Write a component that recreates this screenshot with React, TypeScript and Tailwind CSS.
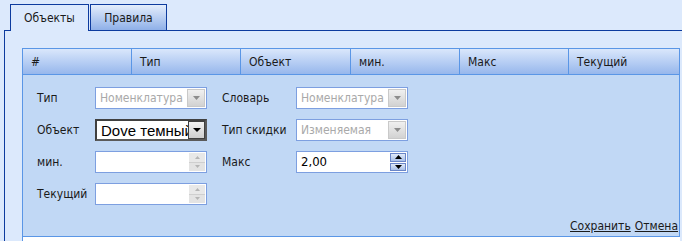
import React from "react";

const NAVY = "border-[#0d3b9e]";

function ArrowDown({ color, w = 7 }: { color: string; w?: number }) {
  return (
    <svg width={w} height={Math.ceil(w / 2)} viewBox={`0 0 ${w} ${Math.ceil(w / 2)}`}>
      <polygon points={`0,0 ${w},0 ${w / 2},${Math.ceil(w / 2)}`} fill={color} />
    </svg>
  );
}
function ArrowUp({ color, w = 7 }: { color: string; w?: number }) {
  return (
    <svg width={w} height={Math.ceil(w / 2)} viewBox={`0 0 ${w} ${Math.ceil(w / 2)}`}>
      <polygon points={`0,${Math.ceil(w / 2)} ${w},${Math.ceil(w / 2)} ${w / 2},0`} fill={color} />
    </svg>
  );
}

function DisabledSelect({ text }: { text: string }) {
  return (
    <div className="w-[112px] h-[22px] border border-[#7d9fe0] bg-white flex items-center">
      <span className="flex-1 pl-[4px] text-[#a9a9a9] whitespace-nowrap overflow-hidden">{text}</span>
      <div className="w-[18px] h-[18px] mr-[1px] border border-[#c9c9c9] bg-gradient-to-b from-[#f0f0f0] to-[#d2d2d2] flex items-center justify-center">
        <ArrowDown color="#8c8c8c" w={7} />
      </div>
    </div>
  );
}

function EnabledSelect({ text }: { text: string }) {
  return (
    <div className="w-[112px] h-[22px] border-2 border-t-[#404040] border-l-[#404040] border-b-[#5a5a5a] border-r-[#5a5a5a] bg-white flex items-center">
      <span className="flex-1 pl-[4px] text-[15px] text-black whitespace-nowrap overflow-hidden leading-none font-['Liberation_Sans',Arial,sans-serif]">{text}</span>
      <div className="w-[17px] h-[18px] border border-[#404040] bg-gradient-to-b from-[#f2f2f2] to-[#cfcfcf] flex items-center justify-center">
        <ArrowDown color="#000" w={8} />
      </div>
    </div>
  );
}

function Spinner({ value, enabled }: { value?: string; enabled?: boolean }) {
  return (
    <div className="w-[112px] h-[22px] border border-[#7d9fe0] bg-white flex items-stretch">
      <span className="flex-1 pl-[4px] text-black text-[13px] flex items-center whitespace-nowrap overflow-hidden">{value}</span>
      {enabled ? (
        <div className="w-[17px] py-[1px] pr-[1px] flex flex-col gap-[1px]">
          <div className="flex-1 border border-[#6a86c8] bg-gradient-to-b from-[#e0eafa] to-[#a9c0e8] flex items-center justify-center">
            <ArrowUp color="#000" w={7} />
          </div>
          <div className="flex-1 border border-[#6a86c8] bg-gradient-to-b from-[#e0eafa] to-[#a9c0e8] flex items-center justify-center">
            <ArrowDown color="#000" w={7} />
          </div>
        </div>
      ) : (
        <div className="w-[17px] py-[1px] pr-[1px] flex flex-col">
          <div className="flex-1 bg-[#e8e8e8] border-b border-[#cfcfcf] flex items-center justify-center">
            <ArrowUp color="#b5b5b5" w={5} />
          </div>
          <div className="flex-1 bg-[#e3e3e3] flex items-center justify-center">
            <ArrowDown color="#b5b5b5" w={5} />
          </div>
        </div>
      )}
    </div>
  );
}

const headers = [
  { t: "#", w: "w-[109px]" },
  { t: "Тип", w: "w-[109px]" },
  { t: "Объект", w: "w-[110px]" },
  { t: "мин.", w: "w-[109px]" },
  { t: "Макс", w: "w-[109px]" },
  { t: "Текущий", w: "w-[111px]" },
];

export default function App() {
  return (
    <div className="w-[682px] h-[241px] overflow-hidden bg-[#dce9fc] pt-[4px] pl-[4px] text-[12px] text-[#1a1a1a] font-['DejaVu_Sans_Condensed','Liberation_Sans',Arial,sans-serif] flex flex-col">
      {/* tabs */}
      <div className="flex h-[27px] shrink-0">
        <div className={`w-[6px] border-b ${NAVY}`} />
        <div className={`w-[79px] border-t border-l border-r ${NAVY} bg-[#dce9fc] flex items-center justify-center pb-[1px]`}>
          Объекты
        </div>
        <div className={`w-[1px] border-b ${NAVY}`} />
        <div className={`w-[77px] border ${NAVY} bg-gradient-to-b from-[#e4edfb] to-[#8fb0e8] flex items-center justify-center`}>
          Правила
        </div>
        <div className={`flex-1 border-b ${NAVY}`} />
      </div>
      {/* panel */}
      <div className={`flex-1 border-l ${NAVY} pt-[17px] pl-[17px] pr-[2px] flex flex-col`}>
        <div className="flex h-[27px] border-y border-l border-[#5a96e6] bg-gradient-to-b from-[#dae7fb] to-[#97b7ec] shrink-0">
          {headers.map((h) => (
            <div key={h.t} className={`${h.w} border-r border-[#5a96e6] flex items-center pl-[8px]`}>
              {h.t}
            </div>
          ))}
        </div>
        <div className="border-l border-r border-b border-[#5a96e6] bg-[#c1d8f5] pt-[12px] pl-[14px] pb-[3px] flex flex-col shrink-0">
          <div className="flex flex-col gap-[10px]">
            <div className="flex items-center h-[22px]">
              <span className="w-[58px]">Тип</span>
              <DisabledSelect text="Номенклатура" />
              <span className="w-[74px] ml-[15px]">Словарь</span>
              <DisabledSelect text="Номенклатура" />
            </div>
            <div className="flex items-center h-[22px]">
              <span className="w-[58px]">Объект</span>
              <EnabledSelect text="Dove темный" />
              <span className="w-[74px] ml-[15px]">Тип скидки</span>
              <DisabledSelect text="Изменяемая" />
            </div>
            <div className="flex items-center h-[22px]">
              <span className="w-[58px]">мин.</span>
              <Spinner />
              <span className="w-[74px] ml-[15px]">Макс</span>
              <Spinner value="2,00" enabled />
            </div>
            <div className="flex items-center h-[22px]">
              <span className="w-[58px]">Текущий</span>
              <Spinner />
            </div>
          </div>
          <div className="flex justify-end gap-[4px] mt-[13px] pr-[1px] h-[15px] items-center">
            <a className="underline text-[#1a1a1a]">Сохранить</a>
            <a className="underline text-[#1a1a1a]">Отмена</a>
          </div>
        </div>
        <div className="flex-1 bg-white border-l border-[#5a96e6]" />
      </div>
    </div>
  );
}
